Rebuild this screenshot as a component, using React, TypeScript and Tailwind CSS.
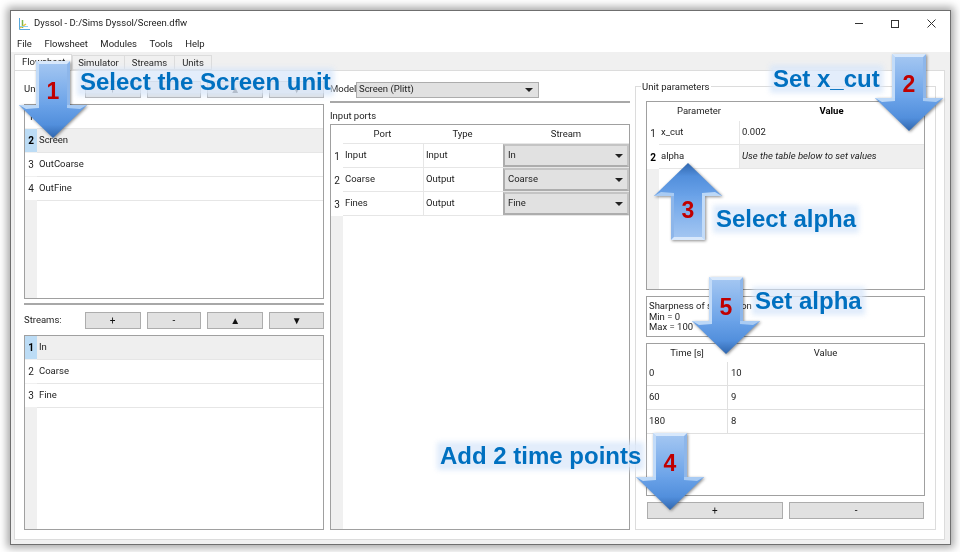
import React from 'react';

const tableRows = ['', 'Screen', 'OutCoarse', 'OutFine'];
const streamRows = ['In', 'Coarse', 'Fine'];
const ports = [
  ['Input', 'Input', 'In'],
  ['Coarse', 'Output', 'Coarse'],
  ['Fines', 'Output', 'Fine'],
];
const timePoints = [
  ['0', '10'],
  ['60', '9'],
  ['180', '8'],
];

function QtButton({ children, className = '' }: { children?: React.ReactNode; className?: string }) {
  return (
    <button className={`h-[17px] flex items-center justify-center bg-[#e1e1e1] border border-[#adadad] text-[10px] leading-none text-[#111] ${className}`}>
      {children}
    </button>
  );
}

function ToolRow({ label }: { label: string }) {
  return (
    <div className="flex items-center h-[17px]">
      <span className="w-[61px] text-[9.5px] text-[#222]">{label}</span>
      <QtButton className="w-[56px]">+</QtButton>
      <QtButton className="w-[55px] ml-[6px]">-</QtButton>
      <QtButton className="w-[56px] ml-[6px] text-[9px]">▲</QtButton>
      <QtButton className="w-[55px] ml-[6px] text-[9px]">▼</QtButton>
    </div>
  );
}

function NameTable({ rows, selected, className = '' }: { rows: string[]; selected: number; className?: string }) {
  return (
    <div className={`border border-[#a0a0a0] bg-white flex ${className}`}>
      <div className="w-[12px] bg-[#f0f0f0] flex flex-col">
        {rows.map((_, i) => (
          <div
            key={i}
            className={`h-[24px] flex items-center justify-center text-[10px] border-b border-[#f0f0f0] ${
              i === selected ? 'bg-[#bcdcf5] font-bold text-black' : 'bg-white text-[#222]'
            }`}
          >
            {i + 1}
          </div>
        ))}
      </div>
      <div className="flex-1 flex flex-col">
        {rows.map((name, i) => (
          <div
            key={i}
            className={`h-[24px] flex items-center pl-[2px] text-[9.5px] text-[#222] border-b border-[#e6e6e6] ${
              i === selected ? 'bg-[#efefef]' : 'bg-white'
            }`}
          >
            {name}
          </div>
        ))}
      </div>
    </div>
  );
}

function InputPorts() {
  return (
    <div className="flex-1 border border-[#a0a0a0] bg-white flex">
      <div className="w-[12px] bg-[#f0f0f0] flex flex-col">
        <div className="h-[19px] bg-white" />
        {ports.map((_, i) => (
          <div key={i} className="h-[24px] flex items-center justify-center bg-white text-[10px] text-[#222]">
            {i + 1}
          </div>
        ))}
      </div>
      <div className="flex-1 flex flex-col">
        <div className="h-[19px] flex items-center text-[9.5px] text-[#222] border-b border-[#e6e6e6]">
          <div className="w-[79px] text-center">Port</div>
          <div className="w-[81px] text-center">Type</div>
          <div className="flex-1 text-center">Stream</div>
        </div>
        {ports.map(([port, type, stream]) => (
          <div key={port} className="h-[24px] flex text-[9.5px] text-[#222] border-b border-[#e6e6e6]">
            <div className="w-[80px] flex items-center pl-[2px]">{port}</div>
            <div className="w-[80px] flex items-center pl-[2px] border-l border-[#e6e6e6]">{type}</div>
            <div className="flex-1 flex items-center justify-between pl-[3px] pr-[4px] bg-[#e1e1e1] border-2 border-[#adadad] border-t-[#c4c4c4] border-r-[#c4c4c4]">
              {stream}
              <Caret />
            </div>
          </div>
        ))}
      </div>
    </div>
  );
}

function Caret() {
  return <span className="w-0 h-0 border-x-[4px] border-x-transparent border-t-[4px] border-t-[#222]" />;
}

function UnitParams() {
  return (
    <div className="h-[189px] border border-[#a0a0a0] bg-white flex">
      <div className="w-[12px] bg-[#f0f0f0] flex flex-col">
        <div className="h-[19px] bg-white" />
        <div className="h-[24px] flex items-center justify-center bg-white text-[10px] text-[#222]">1</div>
        <div className="h-[24px] flex items-center justify-center bg-white text-[10px] font-bold text-black">2</div>
      </div>
      <div className="flex-1 flex flex-col text-[9.5px] text-[#222]">
        <div className="h-[19px] flex items-center">
          <div className="w-[80px] text-center">Parameter</div>
          <div className="flex-1 text-center font-bold text-black">Value</div>
        </div>
        <div className="h-[24px] flex border-b border-[#e6e6e6]">
          <div className="w-[80px] flex items-center pl-[2px]">x_cut</div>
          <div className="flex-1 flex items-center pl-[2px] border-l border-[#e6e6e6]">0.002</div>
        </div>
        <div className="h-[24px] flex border-b border-[#e6e6e6]">
          <div className="w-[80px] flex items-center pl-[2px]">alpha</div>
          <div className="flex-1 flex items-center pl-[2px] italic bg-[#efefef] border-l border-[#e6e6e6]">Use the table below to set values</div>
        </div>
      </div>
    </div>
  );
}

function TimeTable() {
  return (
    <div className="h-[153px] border border-[#a0a0a0] bg-white flex flex-col text-[9.5px] text-[#222]">
      <div className="h-[18px] flex items-center">
        <div className="w-[80px] text-center">Time [s]</div>
        <div className="flex-1 text-center">Value</div>
      </div>
      {timePoints.map(([t, v]) => (
        <div key={t} className="h-[24px] flex border-b border-[#e0e0e0]">
          <div className="w-[80px] flex items-center pl-[2px]">{t}</div>
          <div className="flex-1 flex items-center pl-[3px] border-l border-[#e0e0e0]">{v}</div>
        </div>
      ))}
    </div>
  );
}

function Arrow({ number, up = false, className }: { number: string; up?: boolean; className: string }) {
  return (
    <div className={`absolute w-[68px] h-[77px] drop-shadow-[1px_1px_1.5px_rgba(0,0,0,0.45)] ${className}`}>
      <svg width="68" height="77" viewBox="0 0 68 77" className={up ? 'rotate-180' : ''}>
        <defs>
          <linearGradient id="shaftFill" x1="0" y1="0" x2="0" y2="1">
            <stop offset="0" stopColor="#a6c8f2" />
            <stop offset="1" stopColor="#6aa2e8" />
          </linearGradient>
          <linearGradient id="headFill" x1="0" y1="0" x2="0" y2="1">
            <stop offset="0" stopColor="#6aa2e8" />
            <stop offset="0.6" stopColor="#528fdc" />
            <stop offset="1" stopColor="#2f66ae" />
          </linearGradient>
        </defs>
        <rect x="17" y="0" width="34" height="45" fill="url(#shaftFill)" />
        <polygon points="17,0 20,3 20,45 17,45" fill="#c2dbf8" />
        <polygon points="51,0 48,3 48,45 51,45" fill="#8db6ea" />
        <polygon points="17,0 51,0 48,3 20,3" fill="#d8e8fb" />
        <polygon points="0,44 68,44 34,77" fill="url(#headFill)" />
        <polygon points="0,44 20,44 20,47 7,48" fill="#bcd8f7" />
        <polygon points="68,44 48,44 48,47 61,48" fill="#a9cbf3" />
      </svg>
      <span
        className={`absolute left-0 right-0 text-center font-['Liberation_Sans',sans-serif] font-bold text-[23px] leading-none text-[#c00000] ${
          up ? 'top-[36px]' : 'top-[19px]'
        }`}
      >
        {number}
      </span>
    </div>
  );
}

function Callout({ text, className }: { text: string; className: string }) {
  return (
    <div
      className={`absolute h-[22px] flex items-center bg-[#dce9fa]/80 shadow-[0_0_5px_3px_rgba(214,229,250,0.75)] font-['Liberation_Sans',sans-serif] font-bold text-[24px] leading-none text-[#0070c0] whitespace-nowrap ${className}`}
    >
      {text}
    </div>
  );
}

function AppIcon() {
  return (
    <svg width="13" height="12" viewBox="0 0 13 12" fill="none">
      <path d="M2.5 0V11.5H13" stroke="#58a8dc" strokeWidth="1" />
      <path d="M5.5 2V10" stroke="#7ab648" strokeWidth="1.5" />
      <path d="M3 10L9 6" stroke="#e8c23a" strokeWidth="1.5" />
      <path d="M3 8.5H11" stroke="#8fd0ee" strokeWidth="1" />
    </svg>
  );
}

export default function App() {
  return (
    <div className="relative w-[960px] h-[552px] overflow-hidden bg-white pt-[10px] pl-[10px] font-['Roboto','Noto_Sans',sans-serif] blur-[0.35px]">
      <div className="w-[941px] h-[535px] flex flex-col bg-[#f0f0f0] border border-[#6f6f6f] shadow-[0_0_8px_3px_rgba(0,0,0,0.35)]">
        <div className="h-[25px] flex items-center bg-white pl-[6px] text-[9.5px] text-[#222]">
          <AppIcon />
          <span className="ml-[4px]">Dyssol - D:/Sims Dyssol/Screen.dflw</span>
          <div className="ml-auto flex items-center gap-[28px] pr-[14px]">
            <span className="w-[8px] h-px bg-[#333]" />
            <span className="w-[8px] h-[8px] border border-[#333]" />
            <svg width="9" height="9" viewBox="0 0 9 9" stroke="#333" strokeWidth="1">
              <path d="M0.5 0.5L8.5 8.5M8.5 0.5L0.5 8.5" />
            </svg>
          </div>
        </div>
        <div className="h-[16px] flex items-center bg-white pl-[6px] gap-[12.5px] text-[9.5px] text-[#222]">
          <span>File</span>
          <span>Flowsheet</span>
          <span>Modules</span>
          <span>Tools</span>
          <span>Help</span>
        </div>
        <div className="flex-1 flex flex-col pl-[3px] pr-[5px] pb-[4px]">
          <div className="h-[18px] flex items-end text-[9.5px] text-[#222]">
            <div className="h-[16px] w-[58px] bg-white border border-b-0 border-[#dcdcdc] pl-[7px]">Flowsheet</div>
            <div className="h-[15px] w-[53px] bg-[#f0f0f0] border border-[#dcdcdc] text-center">Simulator</div>
            <div className="h-[15px] w-[50px] bg-[#f0f0f0] border border-l-0 border-[#dcdcdc] text-center">Streams</div>
            <div className="h-[15px] w-[37px] bg-[#f0f0f0] border border-l-0 border-[#dcdcdc] text-center">Units</div>
          </div>
          <div className="flex-1 flex bg-white border border-[#dcdcdc] pl-[9px] pt-[10px] gap-[6px]">
            <div className="w-[300px] flex flex-col">
              <ToolRow label="Units:" />
              <NameTable rows={tableRows} selected={1} className="mt-[6px] h-[195px]" />
              <div className="mt-[4px] h-[2px] bg-[#a8a8a8]" />
              <div className="mt-[7px]">
                <ToolRow label="Streams:" />
              </div>
              <NameTable rows={streamRows} selected={0} className="mt-[6px] h-[195px]" />
            </div>
            <div className="w-[300px] flex flex-col h-[449px]">
              <div className="flex items-center h-[17px] text-[9.5px] text-[#222]">
                <span className="w-[26px]">Model</span>
                <div className="w-[183px] h-[16px] flex items-center justify-between pl-[2px] pr-[5px] bg-[#e1e1e1] border border-[#adadad]">
                  Screen (Plitt)
                  <Caret />
                </div>
              </div>
              <div className="mt-[3px] h-[2px] bg-[#a8a8a8]" />
              <div className="mt-[6px] h-[15px] text-[9.5px] text-[#222]">Input ports</div>
              <InputPorts />
            </div>
            <div className="relative w-[301px] h-[444px] mt-[5px] -ml-px border border-[#dcdcdc] pl-[10px] pr-[10px] pt-[14px] flex flex-col">
              <span className="absolute -top-[5px] left-[5px] bg-white px-[1px] text-[9.5px] leading-none text-[#222]">Unit parameters</span>
              <UnitParams />
              <div className="mt-[6px] h-[41px] border border-[#a0a0a0] pl-[2px] pt-[4px] text-[9.5px] leading-[10.5px] text-[#222]">
                <div>Sharpness of separation</div>
                <div>Min = 0</div>
                <div>Max = 100</div>
              </div>
              <div className="mt-[6px]">
                <TimeTable />
              </div>
              <div className="mt-[6px] flex gap-[6px] px-px">
                <QtButton className="flex-1">+</QtButton>
                <QtButton className="flex-1">-</QtButton>
              </div>
            </div>
          </div>
        </div>
      </div>

      <Callout text="Select the Screen unit" className="left-[80px] top-[71px]" />
      <Callout text="Set x_cut" className="left-[773px] top-[68px]" />
      <Callout text="Select alpha" className="left-[716px] top-[208px]" />
      <Callout text="Set alpha" className="left-[755px] top-[290px]" />
      <Callout text="Add 2 time points" className="left-[440px] top-[445px]" />

      <Arrow number="1" className="left-[19px] top-[61px]" />
      <Arrow number="2" className="left-[875px] top-[54px]" />
      <Arrow number="3" up className="left-[654px] top-[163px]" />
      <Arrow number="4" className="left-[636px] top-[433px]" />
      <Arrow number="5" className="left-[692px] top-[277px]" />
    </div>
  );
}
